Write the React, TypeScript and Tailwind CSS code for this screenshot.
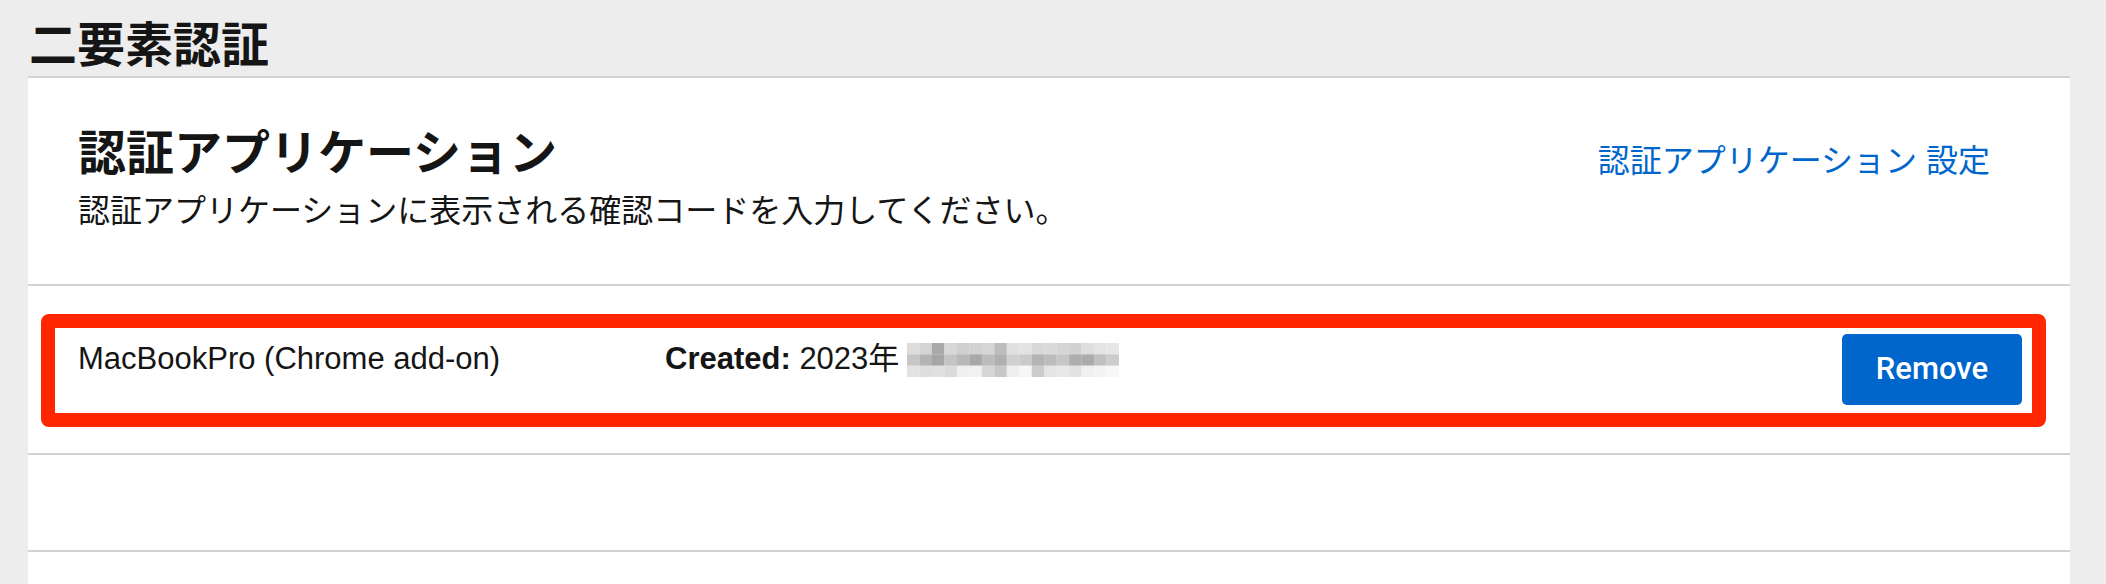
import React from 'react';

const mosaic: string[][] = [
  ['#dcdcdc', '#d4d4d4', '#a9a9a9', '#d8d8d8', '#cfcfcf', '#d2d2d2', '#d6d6d6', '#bdbdbd', '#e0e0e0', '#e3e3e3', '#d8d8d8', '#dadada', '#d6d6d6', '#d2d2d2', '#dedede', '#e4e4e4', '#e6e6e6'],
  ['#c6c6c6', '#b4b4b4', '#a6a6a6', '#c4c4c4', '#b8b8b8', '#a8a8a8', '#bcbcbc', '#b0b0b0', '#d0d0d0', '#cacaca', '#b4b4b4', '#bcbcbc', '#c6c6c6', '#aeaeae', '#acacac', '#c0c0c0', '#cccccc'],
  ['#e2e2e2', '#dedede', '#e0e0e0', '#dadada', '#f0f0f0', '#f2f2f2', '#d6d6d6', '#c8c8c8', '#eeeeee', '#f6f6f6', '#cccccc', '#e4e4e4', '#e8e8e8', '#e2e2e2', '#f0f0f0', '#f4f4f4', '#f8f8f8'],
];

// pixelated date, as in the screenshot
const BlurredDate = () => (
  <svg width="212" height="34" viewBox="0 0 212 34" className="ml-[8px] mt-[3px] shrink-0">
    {mosaic.map((row, r) =>
      row.map((c, i) => (
        <rect key={`${r}-${i}`} x={i * 12.47} y={r * 11.33} width="12.6" height="11.5" fill={c} />
      ))
    )}
  </svg>
);

const DeviceRow = () => (
  <div className="pl-[13px] pr-[24px] pt-[28px] pb-[26px] border-b-2 border-[#d2d2d2]">
    <div className="border-[14px] border-[#ff2600] rounded-[8px]">
      <div className="flex items-start pl-[23px] pr-[10px] pt-[6px] pb-[8px]">
        <div className="w-[587px] mt-[6px] text-[31px] leading-[37px] text-[#151515]">
          MacBookPro (Chrome add-on)
        </div>
        <div className="flex items-start mt-[6px] text-[31px] leading-[37px] text-[#151515]">
          <span className="whitespace-pre">
            <span className="font-bold">Created:</span> 2023年
          </span>
          <BlurredDate />
        </div>
        <div className="flex-1" />
        <button className="w-[180px] h-[71px] rounded-[5px] bg-[#0066cc] text-white text-[31px] font-medium font-['Roboto',sans-serif] flex items-center justify-center">
          Remove
        </button>
      </div>
    </div>
  </div>
);

export default function App() {
  return (
    <div className="min-h-screen flex flex-col bg-[#ededed] pt-[16px] font-['Liberation_Sans','Noto_Sans_CJK_JP',sans-serif] text-[#151515]">
      <h1 className="pl-[29px] h-[60px] text-[48px] leading-[60px] font-bold">二要素認証</h1>
      <div className="flex-1 ml-[28px] mr-[36px] bg-white border-t-2 border-[#d2d2d2]">
        <div className="flex justify-between pl-[50px] pr-[80px] pt-[46px] pb-[53px] border-b-2 border-[#d2d2d2]">
          <div>
            <h2 className="text-[48px] leading-[60px] font-bold">認証アプリケーション</h2>
            <p className="mt-[7px] text-[32px] leading-[40px]">
              認証アプリケーションに表示される確認コードを入力してください。
            </p>
          </div>
          <a href="#" className="mt-[17px] text-[32px] leading-[40px] text-[#0066cc]">
            認証アプリケーション 設定
          </a>
        </div>
        <DeviceRow />
        <div className="h-[97px] border-b-2 border-[#d2d2d2]" />
      </div>
    </div>
  );
}
